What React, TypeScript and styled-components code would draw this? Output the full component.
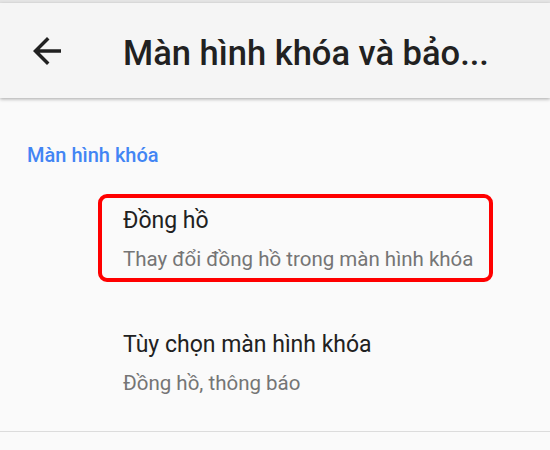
import styled, { createGlobalStyle } from "styled-components";

const GlobalStyle = createGlobalStyle`
  html, body {
    margin: 0;
    padding: 0;
    background: #fafafa;
  }
  body {
    font-family: Roboto, "Noto Sans", "Liberation Sans", sans-serif;
  }
`;

const Screen = styled.div`
  width: 550px;
  height: 450px;
  overflow: hidden;
  background: #fafafa;
`;

const StatusStrip = styled.div`
  height: 3px;
  background: #e4e4e4;
`;

const AppBar = styled.header`
  height: 95px;
  display: flex;
  align-items: center;
  background: #f5f5f5;
  box-shadow: 0 1px 3px rgba(0, 0, 0, 0.25), 0 2px 4px rgba(0, 0, 0, 0.08);
  position: relative;
  z-index: 1;
`;

const BackButton = styled.button`
  width: 42px;
  height: 42px;
  margin-left: 26px;
  padding: 0;
  border: none;
  background: none;
  display: flex;
  align-items: center;
  justify-content: center;
  color: #212121;
`;

const Title = styled.h1`
  margin: 0 0 0 55px;
  padding-top: 4px;
  font-size: 34.5px;
  font-weight: 500;
  color: #212121;
  white-space: nowrap;
`;

const Section = styled.section`
  padding-top: 45px;
  border-bottom: 1px solid #dcdcdc;
`;

const SectionLabel = styled.div`
  padding-left: 27px;
  font-size: 20px;
  line-height: 24px;
  font-weight: 500;
  color: #4285f4;
`;

const List = styled.div`
  display: flex;
  flex-direction: column;
  gap: 36px;
  padding: 27px 0 25px 98px;
`;

const Item = styled.div<{ $highlight?: boolean }>`
  width: fit-content;
  padding: 8px 16px 6px 21px;
  border: 4px solid ${(p) => (p.$highlight ? "#ff0000" : "transparent")};
  border-radius: 9px;
`;

const ItemTitle = styled.div`
  font-size: 23px;
  line-height: 29px;
  color: #212121;
`;

const ItemSummary = styled.div`
  margin-top: 12px;
  font-size: 20.5px;
  line-height: 25px;
  color: #757575;
`;

const items = [
  { title: "Đồng hồ", summary: "Thay đổi đồng hồ trong màn hình khóa", highlight: true },
  { title: "Tùy chọn màn hình khóa", summary: "Đồng hồ, thông báo", highlight: false },
];

export default function App() {
  return (
    <Screen>
      <GlobalStyle />
      <StatusStrip />
      <AppBar>
        <BackButton aria-label="Quay lại">
          <svg width="42" height="42" viewBox="0 0 24 24" fill="currentColor">
            <path d="M20 11H7.83l5.59-5.59L12 4l-8 8 8 8 1.41-1.41L7.83 13H20v-2z" />
          </svg>
        </BackButton>
        <Title>Màn hình khóa và bảo...</Title>
      </AppBar>
      <Section>
        <SectionLabel>Màn hình khóa</SectionLabel>
        <List>
          {items.map((it) => (
            <Item key={it.title} $highlight={it.highlight}>
              <ItemTitle>{it.title}</ItemTitle>
              <ItemSummary>{it.summary}</ItemSummary>
            </Item>
          ))}
        </List>
      </Section>
    </Screen>
  );
}
